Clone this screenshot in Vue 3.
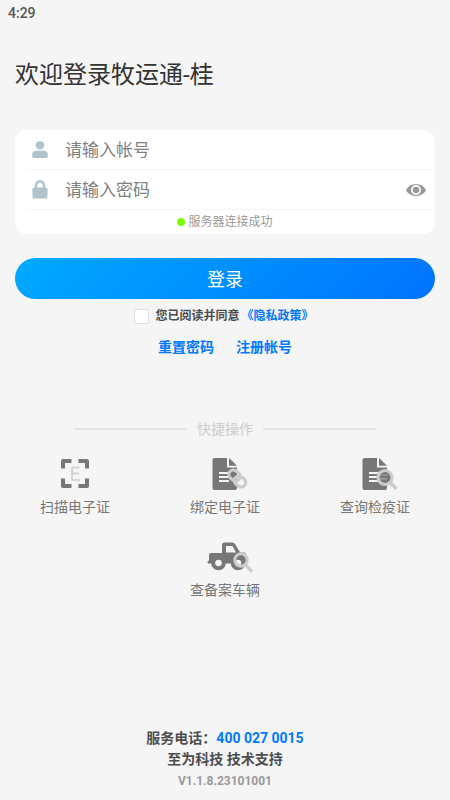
<script setup>
import { ref } from 'vue'

const account = ref('')
const password = ref('')
const showPassword = ref(false)
const agreed = ref(false)

const actions = [
  { id: 'scan', label: '扫描电子证' },
  { id: 'bind', label: '绑定电子证' },
  { id: 'query', label: '查询检疫证' },
  { id: 'vehicle', label: '查备案车辆' },
]
</script>

<template>
  <div class="page">
    <header class="status-bar">4:29</header>

    <main class="content">
      <h1 class="title">欢迎登录牧运通-桂</h1>

      <form class="form" @submit.prevent>
        <div class="card">
          <div class="field">
            <label class="field-icon" for="account" aria-label="帐号">
              <svg width="16" height="18" viewBox="0 0 16 18">
                <circle cx="8" cy="4.2" r="4.3" />
                <path d="M4 9.800h8a3.800 3.800 0 0 1 3.800 3.800v1.900a1.500 1.500 0 0 1-1.500 1.500H1.700a1.500 1.500 0 0 1-1.500-1.500v-1.900A3.800 3.800 0 0 1 4 9.800z" />
              </svg>
            </label>
            <input id="account" v-model="account" class="input" type="text" placeholder="请输入帐号" />
          </div>
          <div class="field">
            <label class="field-icon" for="password" aria-label="密码">
              <svg width="16" height="18" viewBox="0 0 16 18">
                <path d="M4 8V4.400a4 4 0 0 1 8 0V8" fill="none" stroke="#b0c4ce" stroke-width="2.600" />
                <rect x="0.500" y="6.500" width="15" height="11" rx="1.600" />
              </svg>
            </label>
            <input
              id="password"
              v-model="password"
              class="input"
              :type="showPassword ? 'text' : 'password'"
              placeholder="请输入密码"
            />
            <button class="eye" type="button" aria-label="显示密码" @click="showPassword = !showPassword">
              <svg width="20" height="12" viewBox="0 0 20 12">
                <path d="M0 6C2 2 5.600 0 10 0s8 2 10 6c-2 4-5.600 6-10 6S2 10 0 6z" fill="#999" />
                <circle cx="10" cy="6" r="4.100" fill="#999" stroke="#fff" stroke-width="1.700" />
              </svg>
            </button>
          </div>
          <p class="server"><span class="dot"></span>服务器连接成功</p>
        </div>

        <button class="submit" type="submit">登录</button>

        <div class="agreement">
          <input id="agree" v-model="agreed" class="checkbox" type="checkbox" />
          <label for="agree">您已阅读并同意</label>
          <a href="#privacy">《隐私政策》</a>
        </div>
      </form>

      <nav class="links">
        <a href="#reset">重置密码</a>
        <a href="#register">注册帐号</a>
      </nav>
    </main>

    <section class="shortcuts">
      <h2 class="divider">快捷操作</h2>
      <div class="actions">
        <button v-for="action in actions" :key="action.id" class="action" type="button">
          <svg v-if="action.id === 'scan'" width="50" height="34" viewBox="0 0 50 34">
            <path d="M13 11.500V4h8.500M28.500 4H37v7.500M37 21.500V29h-8.500M21.500 29H13v-7.500" fill="none" stroke="#777" stroke-width="4" stroke-linejoin="round" />
            <path d="M29.500 10.500h-7.500v12.500h8M22 16.500h7" fill="none" stroke="#ccc" stroke-width="1.600" />
          </svg>
          <svg v-else-if="action.id === 'vehicle'" width="50" height="34" viewBox="0 0 50 34">
            <path d="M9 15a2 2 0 0 1 2-2h11V5a2.500 2.500 0 0 1 2.500-2.500h8a3 3 0 0 1 2.600 1.500l5 8.500H44a2 2 0 0 1 2 2V20.500a1.500 1.500 0 0 1 0 3H9a1.500 1.500 0 0 1 0-3z" fill="#777" />
            <path d="M26 6h6.500l3.500 6.500H26z" fill="#f5f5f5" />
            <circle cx="18.500" cy="23" r="5.300" fill="#f5f5f5" stroke="#777" stroke-width="4" />
            <circle cx="38" cy="23" r="5.300" fill="#f5f5f5" stroke="#777" stroke-width="4" />
            <circle cx="41" cy="20" r="6.200" fill="none" stroke="#ccc" stroke-width="3" />
            <path d="M45.500 25l6.500 6.500" stroke="#ccc" stroke-width="3.200" />
          </svg>
          <svg v-else width="50" height="34" viewBox="0 0 50 34">
            <path d="M14.500 1H27v9.500h10V31a2 2 0 0 1-2 2H14.500a2 2 0 0 1-2-2V3a2 2 0 0 1 2-2z" fill="#777" />
            <path d="M29 1l8 7.800h-8z" fill="#777" />
            <path d="M19 16h11M19 20h9M19 24h10" stroke="#f5f5f5" stroke-width="1.800" />
            <g v-if="action.id === 'bind'" fill="none" stroke="#ccc" stroke-width="3.200">
              <rect x="28.500" y="14" width="12" height="9" rx="4.500" transform="rotate(38 34.500 18.500)" />
              <rect x="34" y="20" width="12" height="9" rx="4.500" transform="rotate(38 40 24.500)" />
            </g>
            <g v-else>
              <circle cx="35" cy="20.500" r="7" fill="#777" stroke="#ccc" stroke-width="3.200" />
              <path d="M30 18h8M30 21.800h7" stroke="#aaa" stroke-width="1.200" />
              <path d="M40 25.500l6.500 6.500" stroke="#ccc" stroke-width="3.600" />
            </g>
          </svg>
          <span>{{ action.label }}</span>
        </button>
      </div>
    </section>

    <footer class="footer">
      <p>服务电话：<a href="tel:4000270015">400 027 0015</a></p>
      <p>至为科技 技术支持</p>
      <p class="version">V1.1.8.23101001</p>
    </footer>
  </div>
</template>

<style>
body {
  background: #f5f5f5;
}
</style>

<style scoped>
.page {
  display: flex;
  flex-direction: column;
  box-sizing: border-box;
  min-height: 100vh;
  padding-bottom: 8px;
  background: #f5f5f5;
  color: #4d4d4d;
  font-family: Roboto, "Noto Sans CJK SC", sans-serif;
  font-size: 14px;
}

h1,
h2,
p {
  margin: 0;
  font-weight: 400;
}

a {
  color: #007aff;
  text-decoration: none;
}

button,
input {
  margin: 0;
  padding: 0;
  border: 0;
  background: none;
  font: inherit;
}

button {
  cursor: pointer;
}

svg {
  display: block;
  overflow: visible;
}

.status-bar {
  padding: 0 8px;
  color: #555;
  font-weight: 500;
  line-height: 26px;
}

.content {
  padding: 29px 15px 0;
}

.title {
  color: #333;
  font-size: 24px;
  line-height: 40px;
}

.form {
  margin-top: 35px;
}

.card {
  padding-left: 13px;
  border-radius: 12px;
  background: #fff;
}

.field {
  display: flex;
  align-items: center;
  height: 39px;
  padding-right: 9px;
  padding-left: 4px;
  border-bottom: 1px solid #f5f5f5;
}

.field-icon {
  margin-right: 17px;
  fill: #b0c4ce;
}

.input {
  flex: 1;
  min-width: 0;
  height: 36px;
  outline: 0;
  color: #333;
  font-size: 17px;
}

.input::placeholder {
  color: #808080;
  opacity: 1;
}

.server {
  display: flex;
  align-items: center;
  justify-content: center;
  gap: 3px;
  padding-right: 13px;
  color: #999;
  font-size: 12px;
  line-height: 24px;
}

.dot {
  width: 8px;
  height: 8px;
  border-radius: 50%;
  background: #7cfc00;
}

.submit {
  width: 100%;
  height: 41px;
  padding-bottom: 2px;
  margin-top: 24px;
  border-radius: 21px;
  background: linear-gradient(135deg, #00aaff, #0073ff);
  color: #fff;
  font-size: 18px;
}

.agreement {
  display: flex;
  align-items: center;
  justify-content: center;
  margin-top: 7px;
  padding-right: 2px;
  font-size: 12px;
  font-weight: 700;
  line-height: 20px;
}

.agreement label {
  margin: 0 2px 0 6px;
}

.checkbox {
  box-sizing: border-box;
  width: 15px;
  height: 15px;
  border: 1px solid #dcdfe6;
  border-radius: 2px;
  appearance: none;
  background: #fff;
}

.checkbox:checked {
  background: #007aff;
}

.links {
  display: flex;
  justify-content: center;
  gap: 22px;
  margin-top: 11px;
  font-weight: 700;
  line-height: 20px;
}

.shortcuts {
  margin-top: 62px;
}

.divider {
  display: flex;
  align-items: center;
  gap: 10px;
  padding: 0 74px;
  color: #ccc;
  font-size: 14px;
  line-height: 20px;
}

.divider::before,
.divider::after {
  flex: 1;
  height: 2px;
  background: #e5e5e5;
  content: "";
}

.actions {
  display: flex;
  flex-wrap: wrap;
  justify-content: center;
  row-gap: 23px;
  margin-top: 18px;
}

.action {
  display: flex;
  flex-direction: column;
  align-items: center;
  gap: 6px;
  width: 33.33%;
  color: #777;
  line-height: 20px;
}

.footer {
  margin-top: auto;
  padding-top: 24px;
  line-height: 21px;
  text-align: center;
}

.footer p {
  font-weight: 700;
}

.footer .version {
  color: #999;
  font-size: 12px;
  line-height: 22px;
}
</style>
